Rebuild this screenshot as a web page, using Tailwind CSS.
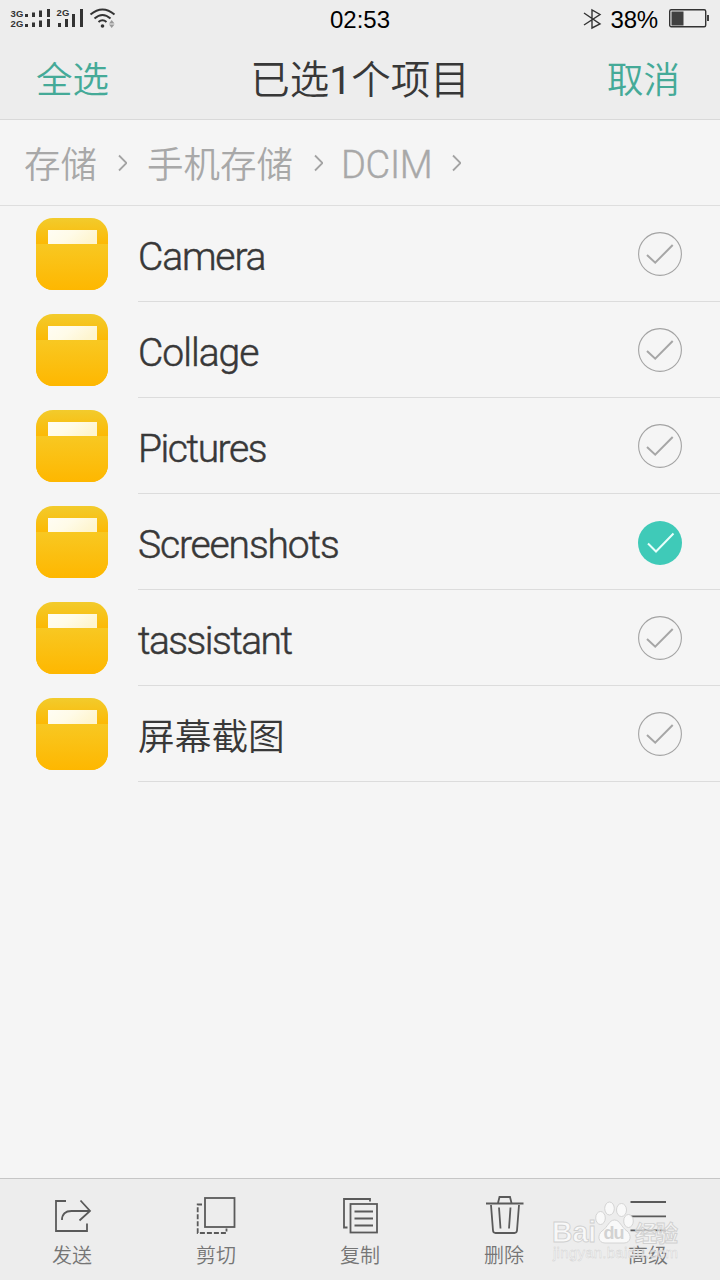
<!DOCTYPE html>
<html lang="zh-CN">
<head>
    <meta charset="UTF-8">
    <meta name="viewport" content="width=device-width, initial-scale=1.0">
    <title>文件管理</title>
    <script src="https://cdn.jsdelivr.net/npm/@tailwindcss/browser@4"></script>
</head>
<body class="bg-[#f5f5f5] text-[#383838] font-['Roboto','Noto_Sans_CJK_SC',sans-serif]">
    <!-- shared icons -->
    <svg class="absolute size-0">
        <defs>
            <linearGradient id="back" x1="0" y1="0" x2="0" y2="1">
                <stop offset="0" stop-color="#f2cb2c"/>
                <stop offset="0.36" stop-color="#fcb905"/>
            </linearGradient>
            <linearGradient id="front" x1="0" y1="0" x2="0" y2="1">
                <stop offset="0" stop-color="#f8c822"/>
                <stop offset="1" stop-color="#feb700"/>
            </linearGradient>
            <linearGradient id="paper" x1="0" y1="0" x2="1" y2="0.4">
                <stop offset="0" stop-color="#fffdf4"/>
                <stop offset="0.5" stop-color="#fffbe8"/>
                <stop offset="1" stop-color="#fef5cf"/>
            </linearGradient>
            <clipPath id="rounded"><rect width="72" height="72" rx="17"/></clipPath>
        </defs>
        <symbol id="folder" viewBox="0 0 72 72">
            <g clip-path="url(#rounded)">
                <rect width="72" height="72" fill="url(#back)"/>
                <rect x="12" y="12" width="49" height="15" fill="url(#paper)"/>
                <rect y="26" width="72" height="46" fill="url(#front)"/>
            </g>
        </symbol>
        <symbol id="unchecked" viewBox="0 0 44 44">
            <circle cx="22" cy="22" r="21.4" fill="none" stroke="#a3a3a3" stroke-width="1.1"/>
            <path d="M9 23 17.200 30.700 34.700 13" fill="none" stroke="#a6a6a6" stroke-width="2"/>
        </symbol>
        <symbol id="checked" viewBox="0 0 44 44">
            <circle cx="22" cy="22" r="22" fill="#3fcab8"/>
            <path d="M10 22.500 18 30.500 35.500 12.500" fill="none" stroke="#e8fffb" stroke-width="2"/>
        </symbol>
    </svg>

    <div class="relative flex h-[1280px] w-[720px] flex-col overflow-hidden">
        <header class="h-[120px] border-b border-[#d9d9d9] bg-[#ededed]">
            <!-- status bar -->
            <div class="grid h-10 grid-cols-3 items-center font-['Liberation_Sans',sans-serif] text-black">
                <svg class="h-10 w-[130px]" viewBox="0 0 130 40">
                    <g fill="#333" font-weight="700" font-size="9.500">
                        <text x="10.500" y="17" textLength="13">3G</text>
                        <text x="10.500" y="27" textLength="13">2G</text>
                        <text x="56.500" y="16" textLength="13">2G</text>
                    </g>
                    <path d="M26.500 14v3M33.500 12.500v4.500M40.500 10.500v6.500M48.500 9v8M26.500 24v3M33.500 22.500v4.500M40.500 20.500v6.500M48.500 19v8M59.500 23v4M66.500 19v8M73.500 14v13M81.500 9v18" stroke="#333" stroke-width="3" fill="none"/>
                    <path d="M90.500 14.500Q102.500 4.500 114.500 14.500M94.500 18.500Q102.500 11.500 110.500 18.500M98.500 22Q102.500 18.500 106.500 22" stroke="#333" stroke-width="2" fill="none"/>
                    <circle cx="102.500" cy="26" r="1.800" fill="#333"/>
                    <path d="M109 23.500 111.700 20 114.500 23.500ZM109 24.500 111.700 28 114.500 24.500Z" fill="#999"/>
                </svg>
                <span class="text-center text-2xl leading-10">02:53</span>
                <div class="flex items-center justify-end pr-[10px]">
                    <svg class="h-10 w-5" viewBox="0 0 20 40"><path d="M1 13 17 24 9 28V10L17 14.500 1 25" fill="none" stroke="#333" stroke-width="1.400"/></svg>
                    <span class="ml-2 text-2xl leading-[38px] tracking-[-0.2px]">38%</span>
                    <svg class="ml-[11px] h-10 w-[41px]" viewBox="0 0 41 40">
                        <rect x="0.700" y="9.700" width="36" height="17" rx="1.500" fill="none" stroke="#333" stroke-width="1.400"/>
                        <path d="M2.500 11.500h12v14h-12zM38 15h2v6h-2z" fill="#404040"/>
                    </svg>
                </div>
            </div>
            <div class="grid h-20 grid-cols-[1fr_auto_1fr] px-9 text-[36.5px] leading-[82px] font-[350] text-[#45aa98]">
                <span>全选</span>
                <h1 class="text-[39.5px] text-[#383838]">已选<span class="font-normal">1</span>个项目</h1>
                <span class="pr-1 text-right">取消</span>
            </div>
        </header>

        <nav class="flex h-[86px] items-center border-b border-[#dedede] pl-6 text-[36.5px] leading-[85px] font-[350] text-[#a8a8a8]">
            <span class="pt-1.5">存储</span>
            <svg class="mr-5 ml-[21px] h-5 w-[9px]" viewBox="0 0 9 20"><path d="M1 2.500 8.500 10 1 17.500" fill="none" stroke="#a3a3a3" stroke-width="1.800"/></svg>
            <span class="pt-1.5">手机存储</span>
            <svg class="mr-[18px] ml-[21px] h-5 w-[9px]" viewBox="0 0 9 20"><path d="M1 2.500 8.500 10 1 17.500" fill="none" stroke="#a3a3a3" stroke-width="1.800"/></svg>
            <span class="pt-1.5 text-[38px] tracking-[-0.3px] [-webkit-text-stroke:0.4px]">DCIM</span>
            <svg class="ml-5 h-5 w-[9px]" viewBox="0 0 9 20"><path d="M1 2.500 8.500 10 1 17.500" fill="none" stroke="#a3a3a3" stroke-width="1.800"/></svg>
        </nav>

        <ul class="flex-1 text-[39px] leading-[90px] font-[350] tracking-[-1.15px]">
            <li class="flex h-24 items-center pl-9">
                <svg class="size-[72px]"><use href="#folder"/></svg>
                <div class="ml-[30px] flex h-24 flex-1 items-center justify-between border-b border-[#dcdcdc] pr-[38px]">
                    <span class="pt-1.5 [-webkit-text-stroke:0.5px]">Camera</span>
                    <svg class="size-11"><use href="#unchecked"/></svg>
                </div>
            </li>
            <li class="flex h-24 items-center pl-9">
                <svg class="size-[72px]"><use href="#folder"/></svg>
                <div class="ml-[30px] flex h-24 flex-1 items-center justify-between border-b border-[#dcdcdc] pr-[38px]">
                    <span class="pt-1.5 tracking-[-1px] [-webkit-text-stroke:0.5px]">Collage</span>
                    <svg class="size-11"><use href="#unchecked"/></svg>
                </div>
            </li>
            <li class="flex h-24 items-center pl-9">
                <svg class="size-[72px]"><use href="#folder"/></svg>
                <div class="ml-[30px] flex h-24 flex-1 items-center justify-between border-b border-[#dcdcdc] pr-[38px]">
                    <span class="pt-1.5 tracking-[-1.45px] [-webkit-text-stroke:0.5px]">Pictures</span>
                    <svg class="size-11"><use href="#unchecked"/></svg>
                </div>
            </li>
            <li class="flex h-24 items-center pl-9">
                <svg class="size-[72px]"><use href="#folder"/></svg>
                <div class="ml-[30px] flex h-24 flex-1 items-center justify-between border-b border-[#dcdcdc] pr-[38px]">
                    <span class="pt-1.5 [-webkit-text-stroke:0.5px]">Screenshots</span>
                    <svg class="mt-0.5 size-11"><use href="#checked"/></svg>
                </div>
            </li>
            <li class="flex h-24 items-center pl-9">
                <svg class="size-[72px]"><use href="#folder"/></svg>
                <div class="ml-[30px] flex h-24 flex-1 items-center justify-between border-b border-[#dcdcdc] pr-[38px]">
                    <span class="pt-1.5 tracking-[-1.55px] [-webkit-text-stroke:0.5px]">tassistant</span>
                    <svg class="size-11"><use href="#unchecked"/></svg>
                </div>
            </li>
            <li class="flex h-24 items-center pl-9">
                <svg class="size-[72px]"><use href="#folder"/></svg>
                <div class="ml-[30px] flex h-24 flex-1 items-center justify-between border-b border-[#dcdcdc] pr-[38px]">
                    <span class="pt-2 text-[36.7px] tracking-normal">屏幕截图</span>
                    <svg class="size-11"><use href="#unchecked"/></svg>
                </div>
            </li>
        </ul>

        <!-- bottom toolbar -->
        <footer class="grid h-[102px] grid-cols-5 border-t border-[#c6c6c6] bg-[#ededed] pt-[17px] text-center text-xl leading-10 font-[350] text-[#757575]">
            <div class="flex flex-col items-center">
                <svg class="size-10" viewBox="0.500 0.500 40 40" fill="none" stroke="#5a5a5a" stroke-width="1.800">
                    <path d="M14.500 5.500H4.500V35.500H35.500V28M10.500 24.500C10.500 18 14 15.500 20 15.500H38M29 5 38.500 15.500 28 25"/>
                </svg>
                <span>发送</span>
            </div>
            <div class="flex flex-col items-center">
                <svg class="size-10" viewBox="0.500 0.500 40 40" fill="none" stroke="#5a5a5a" stroke-width="1.800">
                    <rect x="9.500" y="2.500" width="29.500" height="29"/>
                    <path d="M6.500 9H2.200V37.500H31V33" stroke-dasharray="5 2"/>
                </svg>
                <span>剪切</span>
            </div>
            <div class="flex flex-col items-center">
                <svg class="size-10" viewBox="0.500 0.500 40 40" fill="none" stroke="#5a5a5a" stroke-width="1.800">
                    <path d="M30.500 6V3.500H4.500V32H8"/>
                    <rect x="11" y="8.500" width="26.500" height="28.500"/>
                    <path d="M15 16H33.500M15 23H33.500M15 30H33.500"/>
                </svg>
                <span>复制</span>
            </div>
            <div class="flex flex-col items-center">
                <svg class="size-10" viewBox="0 0.500 40 40" fill="none" stroke="#5a5a5a" stroke-width="1.800">
                    <path d="M2 8H39.500M14 7.500 15.500 1.500H26L27.500 7.500M7 9.500 9 35Q9.200 37.500 11.500 37.500H30.500Q32.700 37.500 33 35L35 9.500M15 12 16.500 33M26.500 12 25 33"/>
                </svg>
                <span>删除</span>
            </div>
            <div class="flex flex-col items-center">
                <svg class="size-10" viewBox="0 0 40 40" fill="none" stroke="#5a5a5a" stroke-width="1.800">
                    <path d="M2.500 6H38M2.500 20.300H38M2.500 34.300H38"/>
                </svg>
                <span>高级</span>
            </div>
        </footer>

        <!-- watermark -->
        <svg class="absolute right-0 bottom-0 h-[110px] w-[180px]" viewBox="0 0 180 110">
            <g fill="#fafafa" fill-opacity="0.9" stroke="#d0d0d0" stroke-width="0.900">
                <ellipse cx="60.500" cy="48" rx="4.800" ry="6.500"/>
                <ellipse cx="69.500" cy="38.500" rx="4.800" ry="6.500"/>
                <ellipse cx="81.500" cy="40" rx="5" ry="6.500"/>
                <ellipse cx="88.500" cy="51" rx="4.800" ry="6.500"/>
                <path d="M74.500 50C69 50 68 57 62 61C57 65 58 73 65 73H84C91 73 92 65 87 61C81 57 80 50 74.500 50Z"/>
                <text x="12" y="72" font-family="Liberation Sans" font-weight="700" font-size="29" textLength="44" lengthAdjust="spacingAndGlyphs">Bai</text>
                <text x="95" y="71" font-family="Noto Sans CJK SC" font-weight="700" font-size="22" textLength="43" fill-opacity="0.600">经验</text>
            </g>
            <text x="63.500" y="69" font-family="Liberation Sans" font-weight="700" font-size="18" fill="#d2d2d2" textLength="21">du</text>
            <text x="13" y="88" font-family="Liberation Sans" font-size="15" fill="#fafafa" fill-opacity="0.700" stroke="#cfcfcf" stroke-width="0.400" textLength="125">jingyan.baidu.com</text>
        </svg>
    </div>
</body>
</html>
